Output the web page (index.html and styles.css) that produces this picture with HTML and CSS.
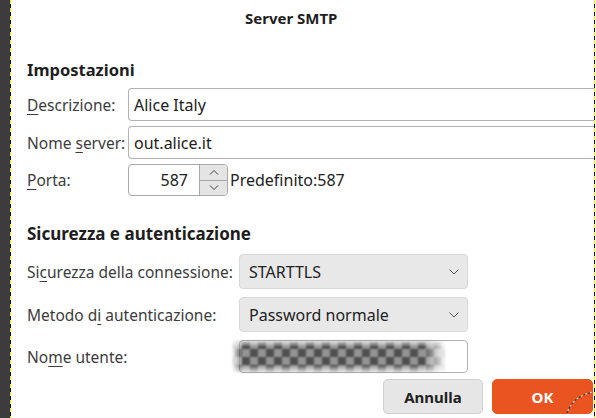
FILE: index.html
```html
<!DOCTYPE html>
<html lang="it">
<head>
    <meta charset="UTF-8">
    <title>Server SMTP</title>
    <link rel="stylesheet" href="styles.css">
</head>
<body>
    <div class="canvas">
        <div class="gutter"></div>
        <div class="marching"></div>
        <div class="dialog">
            <div class="title">Server SMTP</div>

            <h2 class="section">Impostazioni</h2>
            <div class="form-grid settings">
                <label><u>D</u>escrizione:</label>
                <div class="entry">Alice Italy</div>
                <label>Nome <u>s</u>erver:</label>
                <div class="entry">out.alice.it</div>
                <label><u>P</u>orta:</label>
                <div class="port-row">
                    <div class="spin">
                        <div class="spin-value">587</div>
                        <div class="spin-buttons">
                            <span class="spin-btn">
                                <svg width="10" height="6" viewBox="0 0 10 6"><path d="M1 5.5 L5 1.5 L9 5.5" fill="none" stroke="#444" stroke-width="1"/></svg>
                            </span>
                            <span class="spin-btn">
                                <svg width="10" height="6" viewBox="0 0 10 6"><path d="M1 0.5 L5 4.5 L9 0.5" fill="none" stroke="#444" stroke-width="1"/></svg>
                            </span>
                        </div>
                    </div>
                    <span class="hint">Predefinito:587</span>
                </div>
            </div>

            <h2 class="section second">Sicurezza e autenticazione</h2>
            <div class="form-grid security">
                <label>Si<u>c</u>urezza della connessione:</label>
                <div class="combo">STARTTLS
                    <svg width="10" height="6" viewBox="0 0 10 6"><path d="M0.5 0.5 L5 5 L9.5 0.5" fill="none" stroke="#555" stroke-width="1"/></svg>
                </div>
                <label>Metodo d<u>i</u> autenticazione:</label>
                <div class="combo">Password normale
                    <svg width="10" height="6" viewBox="0 0 10 6"><path d="M0.5 0.5 L5 5 L9.5 0.5" fill="none" stroke="#555" stroke-width="1"/></svg>
                </div>
                <label>No<u>m</u>e utente:</label>
                <div class="entry user">
                    <div class="redacted"></div>
                </div>
            </div>

            <div class="actions">
                <button class="btn">Annulla</button>
                <button class="btn ok">OK</button>
            </div>

            <!-- selection outline of the rounded corner -->
            <svg class="corner" width="30" height="24" viewBox="0 0 30 24">
                <path d="M2 23 C6 12 14 5 28 2" fill="none" stroke="#333" stroke-width="1.2" stroke-dasharray="3 2"/>
                <path d="M2 23 C6 12 14 5 28 2" fill="none" stroke="#ddd" stroke-width="1.2" stroke-dasharray="2 3" stroke-dashoffset="3"/>
            </svg>
        </div>
        <div class="marching"></div>
        <div class="gutter-right"></div>
    </div>
</body>
</html>
```

FILE: styles.css
```css
* {
    margin: 0;
    padding: 0;
    box-sizing: border-box;
}

body {
    width: 596px;
    height: 418px;
    overflow: hidden;
    background: #fff;
    font-family: "Noto Sans", sans-serif;
    font-size: 15.5px;
    color: #3c3c3c;
}

.canvas {
    display: flex;
    height: 418px;
}

.gutter {
    width: 10px;
    background: #3c3c3c;
}

.gutter-right {
    width: 1px;
    background: #fff;
}

/* yellow / black selection edge */
.marching {
    width: 1px;
    background: repeating-linear-gradient(to bottom, #f5ea00 0, #f5ea00 4px, #111 4px, #111 8px);
}

.dialog {
    flex: 1;
    position: relative;
    padding-left: 16px;
    background: #fff;
}

.title {
    height: 36px;
    line-height: 36px;
    padding-left: 218px;
    font-weight: bold;
    font-size: 15px;
    color: #1e1e1e;
}

.section {
    font-size: 16.5px;
    font-weight: bold;
    color: #1e1e1e;
    height: 52px;
    line-height: 24px;
    padding-top: 22px;
}

.section.second {
    height: 58px;
    padding-top: 26px;
    font-size: 17px;
}

.form-grid {
    display: grid;
    row-gap: 5px;
    align-items: center;
}

.form-grid label {
    white-space: nowrap;
}

.settings {
    grid-template-columns: 101px 1fr;
    grid-template-rows: 33px 33px 32px;
}

.security {
    grid-template-columns: 212px 229px;
    grid-template-rows: 35px 35px 33px;
    row-gap: 8px;
}

label u {
    text-decoration-thickness: 1px;
    text-underline-offset: 3px;
}

.entry {
    height: 100%;
    border: 1px solid #b2b2b2;
    border-radius: 4px 0 0 4px;
    border-right: none;
    padding-left: 5px;
    display: flex;
    align-items: center;
    color: #222;
    font-size: 16px;
    background: #fff;
}

.entry.user {
    border-right: 1px solid #b2b2b2;
    border-radius: 4px;
    position: relative;
}

/* pixelated blur over the username */
.redacted {
    position: absolute;
    left: -9px;
    top: -2px;
    width: 216px;
    height: 35px;
    background-color: #777;
    background-image: conic-gradient(#4e4e4e 25%, #959595 25% 50%, #4e4e4e 50% 75%, #959595 75%);
    background-size: 16px 16px;
    background-position: 3px 2px;
    filter: blur(0.8px);
    -webkit-mask-image: linear-gradient(to right, transparent 0, #000 12px, #000 192px, transparent 100%), linear-gradient(to bottom, transparent 0, #000 8px, #000 26px, transparent 100%);
    -webkit-mask-composite: source-in;
    mask-image: linear-gradient(to right, transparent 0, #000 12px, #000 192px, transparent 100%), linear-gradient(to bottom, transparent 0, #000 8px, #000 26px, transparent 100%);
    mask-composite: intersect;
}

.port-row {
    display: flex;
    align-items: center;
    height: 100%;
}

.spin {
    display: flex;
    width: 100px;
    height: 32px;
    border: 1px solid #a8a8a8;
    border-radius: 4px;
    overflow: hidden;
}

.spin-value {
    width: 70px;
    text-align: right;
    padding-right: 11px;
    line-height: 30px;
    font-size: 16px;
    color: #222;
}

.spin-buttons {
    flex: 1;
    display: flex;
    flex-direction: column;
    border-left: 1px solid #a8a8a8;
    background: #e4e4e4;
}

.spin-btn {
    flex: 1;
    display: flex;
    align-items: center;
    justify-content: center;
}

.spin-btn + .spin-btn {
    border-top: 1px solid #a8a8a8;
}

.hint {
    padding-left: 2px;
    font-size: 16px;
    color: #222;
}

.combo {
    height: 100%;
    display: flex;
    align-items: center;
    justify-content: space-between;
    padding: 0 8px 0 9px;
    background: #e8e8e8;
    border: 1px solid #d8d8d8;
    border-radius: 4px;
    color: #222;
    font-size: 16px;
}

.actions {
    display: flex;
    gap: 9px;
    padding-left: 356px;
    margin-top: 6px;
}

.btn {
    height: 35px;
    width: 100px;
    border: 1px solid #cfcfcf;
    border-radius: 5px;
    background: #e6e6e6;
    font-family: "Noto Sans", sans-serif;
    font-size: 15px;
    font-weight: bold;
    color: #222;
}

.btn.ok {
    width: 101px;
    background: #e95420;
    border-color: #e95420;
    color: #fff;
}

.corner {
    position: absolute;
    right: -1px;
    bottom: 4px;
}
```
